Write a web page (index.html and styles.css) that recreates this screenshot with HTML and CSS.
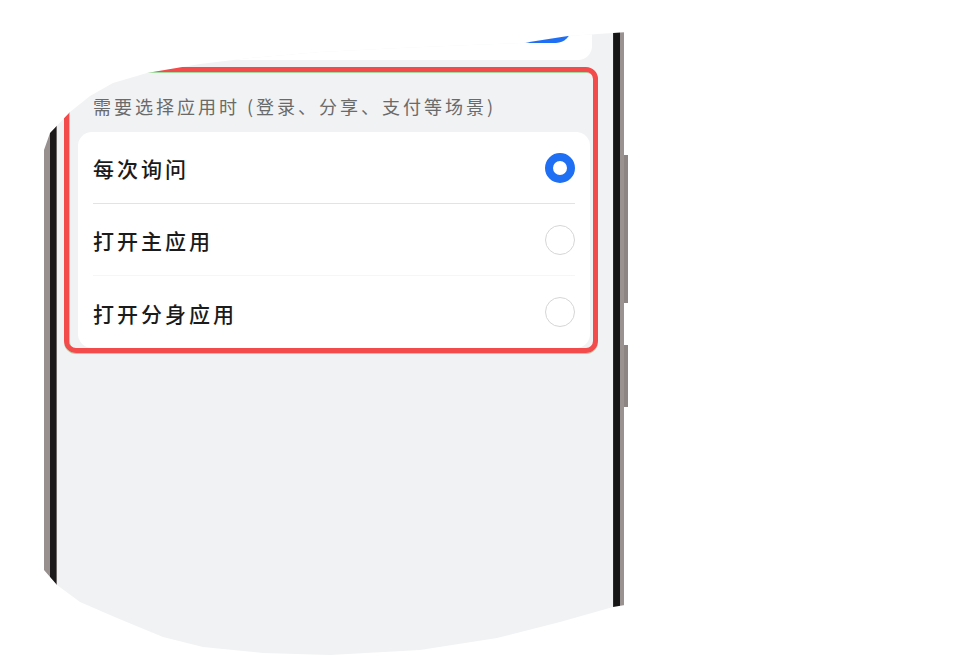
FILE: index.html
```html
<!DOCTYPE html>
<html lang="zh-CN">
<head>
<meta charset="utf-8">
<title>应用分身设置</title>
<link rel="stylesheet" href="styles.css">
</head>
<body>
<div class="stage">
  <div class="phone">
    <div class="frame frame-left"></div>
    <div class="screen">
      <div class="top-card"><span class="toggle"></span></div>
      <section class="highlight">
        <p class="label">需要选择应用时 (登录、分享、支付等场景)</p>
        <div class="card">
          <div class="row"><span class="row-text">每次询问</span><span class="radio checked"></span></div>
          <div class="row row-faint"><span class="row-text">打开主应用</span><span class="radio"></span></div>
          <div class="row row-last"><span class="row-text">打开分身应用</span><span class="radio"></span></div>
        </div>
      </section>
    </div>
    <div class="frame frame-right"></div>
    <div class="buttons"><span class="btn btn-1"></span><span class="btn btn-2"></span></div>
  </div>
</div>
</body>
</html>
```
FILE: styles.css
```css
html, body {
  margin: 0;
  padding: 0;
  background: #ffffff;
}

body {
  font-family: "Noto Sans CJK SC", "Noto Sans", sans-serif;
}

.stage {
  padding-left: 44px;
  height: 657px;
  overflow: hidden;
}

.phone {
  display: flex;
  width: 584px;
  height: 657px;
  clip-path: polygon(
    0px 150px, 6px 133px, 26px 112px, 46px 96px, 69px 83px, 103px 73px,
    156px 64px, 206px 58px, 276px 52px, 356px 48px, 426px 45px, 479px 43px,
    524px 36px, 584px 32px,
    584px 603px, 581px 605px, 569px 607px, 516px 622px, 453px 638px,
    376px 650px, 286px 655px, 219px 653px, 159px 647px, 119px 637px,
    73px 618px, 36px 602px, 13px 585px, 0px 570px
  );
}

.frame-left {
  width: 13px;
  flex: none;
  background: linear-gradient(to right, #988f8f 0 6px, #1c1a1a 6px 12px, #6d6868 12px 13px);
}

.frame-right {
  width: 11px;
  flex: none;
  background: linear-gradient(to right, #2a2828 0 1px, #161515 1px 7px, #9a9191 7px 11px);
}

.buttons {
  width: 4px;
  flex: none;
  display: flex;
  flex-direction: column;
}

.btn {
  display: block;
  width: 4px;
  background: #8d8484;
}

.btn-1 {
  margin-top: 155px;
  height: 148px;
}

.btn-2 {
  margin-top: 42px;
  height: 62px;
}

.screen {
  flex: 1;
  background: #f1f2f4;
  display: flex;
  flex-direction: column;
}

.top-card {
  height: 60px;
  margin: 0 21px;
  background: #ffffff;
  border-radius: 0 0 14px 14px;
  display: flex;
  justify-content: flex-end;
  align-items: flex-end;
  padding: 0 21px 17px 0;
  box-sizing: border-box;
}

.toggle {
  display: block;
  width: 56px;
  height: 30px;
  border-radius: 15px;
  background: #1f6ff4;
}

.highlight {
  margin: 7px 15px 0 7px;
  border: 5px solid #f34b4b;
  border-radius: 12px;
  padding: 0 3px 0 9px;
  box-shadow: inset 1px 1px 0 #a3d8a0, 0 1px 0 #a3d8a0;
}

.label {
  margin: 0;
  padding: 24px 0 16px 15px;
  font-size: 18px;
  line-height: 20px;
  letter-spacing: 3px;
  color: #6a6a6a;
  white-space: nowrap;
}

.card {
  background: #ffffff;
  border-radius: 14px;
}

.row {
  height: 72px;
  margin: 0 15px;
  display: flex;
  align-items: center;
  justify-content: space-between;
  border-bottom: 1px solid #e3e3e5;
  box-sizing: border-box;
}

.row-faint {
  border-bottom-color: #f6f6f7;
}

.row-last {
  border-bottom: none;
}

.row-text {
  padding-top: 1px;
  font-size: 21px;
  font-weight: 500;
  letter-spacing: 3px;
  color: #1b1b1b;
}

.radio {
  width: 30px;
  height: 30px;
  box-sizing: border-box;
  border-radius: 50%;
  border: 1.5px solid #d6d6d6;
  background: #ffffff;
}

.radio.checked {
  border: 8.5px solid #1e6ff3;
}
```
